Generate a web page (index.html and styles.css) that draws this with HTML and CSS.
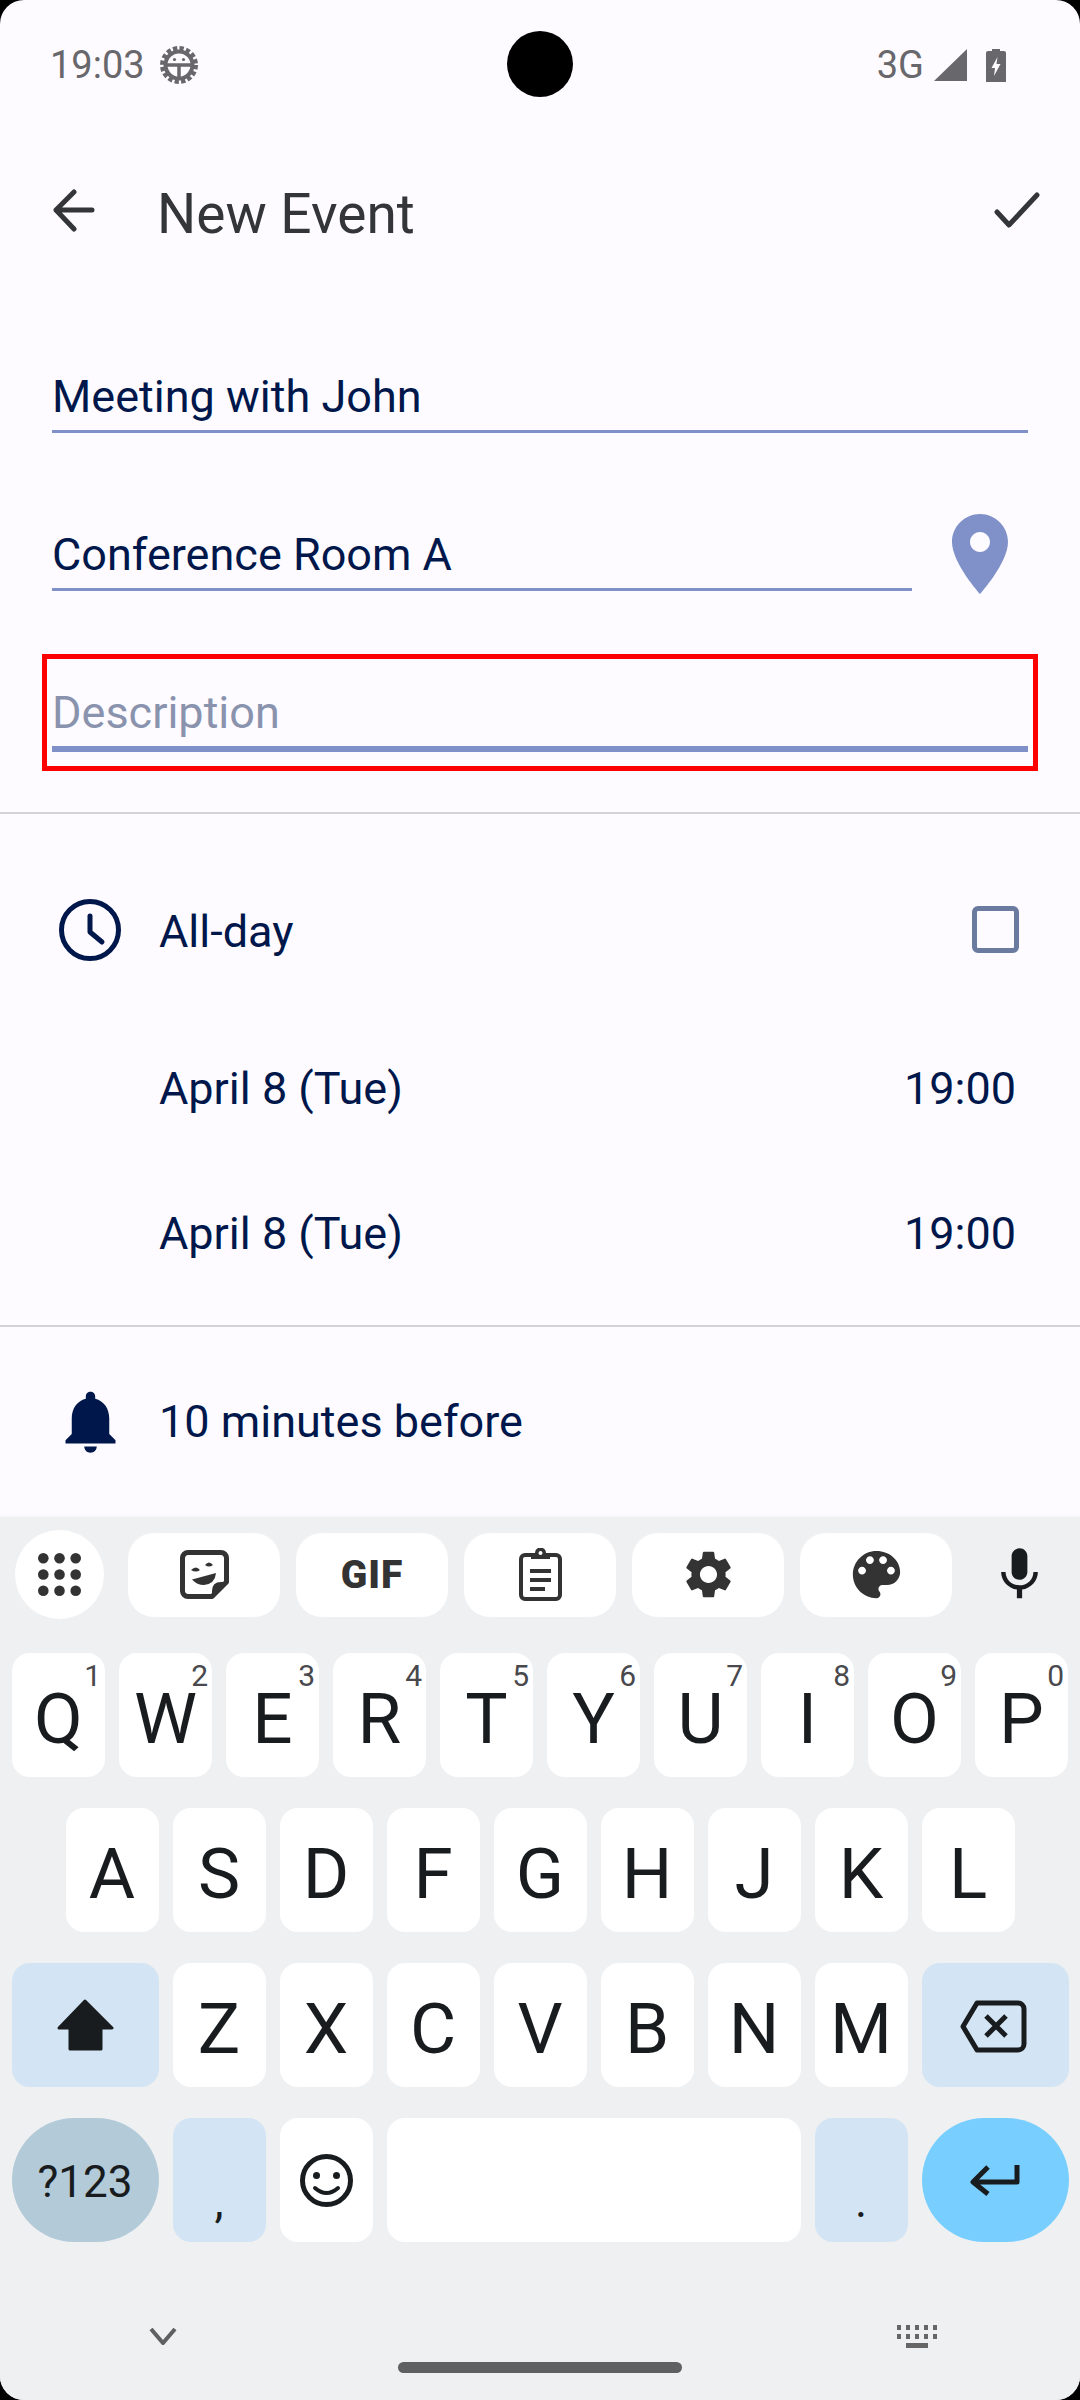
FILE: index.html
```html
<!DOCTYPE html>
<html lang="en">
<head>
    <meta charset="UTF-8">
    <meta name="viewport" content="width=device-width, initial-scale=1.0">
    <title>New Event</title>
    <link rel="stylesheet" href="styles.css">
</head>
<body>
    <div class="screen">
        <div class="camera"></div>
        <div class="content">
            <div class="status-bar">
                <span class="status-time">19:03</span>
                <svg class="status-debug" width="38" height="38" viewBox="0 0 38 38">
                    <circle cx="19" cy="19" r="16.5" fill="none" stroke="#68676b" stroke-width="5" stroke-dasharray="4.2 2.28"/>
                    <circle cx="19" cy="19" r="13.5" fill="none" stroke="#68676b" stroke-width="4"/>
                    <path d="M6 19H32M19 19V33" stroke="#68676b" stroke-width="3.5"/>
                    <circle cx="14.5" cy="13.5" r="1.6" fill="#68676b"/>
                    <circle cx="23.5" cy="13.5" r="1.6" fill="#68676b"/>
                </svg>
                <span class="status-net">3G</span>
                <svg class="status-signal" width="33" height="32" viewBox="0 0 33 32"><path d="M33 0V32H0Z" fill="#68676b"/></svg>
                <svg class="status-battery" width="20" height="33" viewBox="0 0 20 33">
                    <path d="M6 0H14V2H18Q20 2 20 4V33H0V4Q0 2 2 2H6Z" fill="#68676b"/>
                    <path d="M11.5 8L5.5 19H9L8 27L14.5 15H10.5Z" fill="#fdfbff"/>
                </svg>
            </div>

            <div class="app-bar">
                <svg width="44" height="44" viewBox="0 0 44 44"><path d="M4 21H40M22 3L4 21L22 40" fill="none" stroke="#333538" stroke-width="5" stroke-linecap="round" stroke-linejoin="round"/></svg>
                <h1 class="app-title">New Event</h1>
                <svg width="48" height="38" viewBox="0 0 48 38"><path d="M4 20L16 33L44 3" fill="none" stroke="#333538" stroke-width="5" stroke-linecap="round" stroke-linejoin="round"/></svg>
            </div>

            <div class="form">
                <div class="field">Meeting with John</div>
                <div class="field-row">
                    <div class="field">Conference Room A</div>
                    <svg class="pin" width="96" height="96" viewBox="0 0 24 24"><path d="M12 2C8.13 2 5 5.13 5 9c0 5.25 7 13 7 13s7-7.75 7-13c0-3.87-3.13-7-7-7zm0 9.5c-1.38 0-2.5-1.12-2.5-2.5s1.12-2.5 2.5-2.5 2.5 1.12 2.5 2.5-1.12 2.5-2.5 2.5z" fill="#7f91c8"/></svg>
                </div>
                <div class="field field-focus">Description</div>
            </div>

            <div class="times">
                <div class="row row-allday">
                    <svg class="row-clock" width="62" height="62" viewBox="0 0 62 62">
                        <circle cx="31" cy="31" r="28.5" fill="none" stroke="#00174b" stroke-width="5"/>
                        <path d="M31 17V33L43 43" fill="none" stroke="#00174b" stroke-width="5" stroke-linecap="round" stroke-linejoin="round"/>
                    </svg>
                    <span>All-day</span>
                    <span class="checkbox"></span>
                </div>
                <div class="row row-date row-date-first"><span>April 8 (Tue)</span><span>19:00</span></div>
                <div class="row row-date"><span>April 8 (Tue)</span><span>19:00</span></div>
            </div>

            <div class="row row-reminder">
                <svg class="row-bell" width="75" height="75" viewBox="0 0 24 24"><path d="M12 22c1.1 0 2-.9 2-2h-4c0 1.1.89 2 2 2zm6-6v-5c0-3.07-1.64-5.64-4.5-6.32V4c0-.83-.67-1.5-1.5-1.5s-1.5.67-1.5 1.5v.68C7.63 5.36 6 7.92 6 11v5l-2 2v1h16v-1l-2-2z" fill="#00174b"/></svg>
                <span>10 minutes before</span>
            </div>
        </div>

        <div class="keyboard">
            <div class="kb-tools">
                <div class="tool-circle">
                    <svg width="43" height="43" viewBox="0 0 43 43" fill="#333">
                        <circle cx="5.3" cy="5.3" r="5.3"/><circle cx="21.5" cy="5.3" r="5.3"/><circle cx="37.7" cy="5.3" r="5.3"/>
                        <circle cx="5.3" cy="21.5" r="5.3"/><circle cx="21.5" cy="21.5" r="5.3"/><circle cx="37.7" cy="21.5" r="5.3"/>
                        <circle cx="5.3" cy="37.7" r="5.3"/><circle cx="21.5" cy="37.7" r="5.3"/><circle cx="37.7" cy="37.7" r="5.3"/>
                    </svg>
                </div>
                <div class="tool-key">
                    <svg width="49" height="49" viewBox="0 0 49 49">
                        <path d="M2.5 8A5.5 5.5 0 0 1 8 2.500H41A5.500 5.500 0 0 1 46.500 8V32L32 46.500H8A5.500 5.500 0 0 1 2.500 41Z" fill="none" stroke="#333" stroke-width="5" stroke-linejoin="round"/>
                        <path d="M32 47V41Q32 32 41 32H47Z" fill="#333"/>
                        <path d="M12 29.500L36 23Q35 34 24 35Q17 35 12 29.500Z" fill="#333"/>
                        <path d="M11 20Q16 15 20 20Q16 23 11 20ZM25 15Q29 10 33 15Q29 18 25 15Z" fill="#333"/>
                    </svg>
                </div>
                <div class="tool-key tool-gif">GIF</div>
                <div class="tool-key">
                    <svg width="43" height="53" viewBox="0 0 43 53">
                        <rect x="2" y="7" width="39" height="44" rx="4" fill="none" stroke="#333" stroke-width="4"/>
                        <path d="M12 5H16A5.500 5.500 0 0 1 27 5H31V11H12Z" fill="#333"/>
                        <circle cx="21.500" cy="5" r="2" fill="#fff"/>
                        <path d="M11 23H32M11 32H32M11 41H26" stroke="#333" stroke-width="4"/>
                    </svg>
                </div>
                <div class="tool-key">
                    <svg width="57" height="57" viewBox="0 0 24 24"><path d="M19.14 12.94c.04-.3.06-.61.06-.94 0-.32-.02-.64-.07-.94l2.03-1.58c.18-.14.23-.41.12-.61l-1.92-3.32c-.12-.22-.37-.29-.59-.22l-2.39.96c-.5-.38-1.03-.7-1.62-.94l-.36-2.54c-.04-.24-.24-.41-.48-.41h-3.84c-.24 0-.43.17-.47.41l-.36 2.54c-.59.24-1.13.57-1.62.94l-2.39-.96c-.22-.08-.47 0-.59.22L2.74 8.87c-.12.21-.08.47.12.61l2.03 1.58c-.05.3-.09.63-.09.94s.02.64.07.94l-2.03 1.58c-.18.14-.23.41-.12.61l1.92 3.32c.12.22.37.29.59.22l2.39-.96c.5.38 1.03.7 1.62.94l.36 2.54c.05.24.24.41.48.41h3.84c.24 0 .44-.17.47-.41l.36-2.54c.59-.24 1.13-.56 1.62-.94l2.39.96c.22.08.47 0 .59-.22l1.92-3.32c.12-.22.07-.47-.12-.61l-2.01-1.58zM12 15.6c-1.98 0-3.6-1.62-3.6-3.6s1.62-3.6 3.6-3.6 3.6 1.62 3.6 3.6-1.62 3.6-3.6 3.6z" fill="#333"/></svg>
                </div>
                <div class="tool-key">
                    <svg width="63" height="63" viewBox="0 0 24 24"><path d="M12 3c-4.97 0-9 4.03-9 9s4.03 9 9 9c.83 0 1.5-.67 1.5-1.5 0-.39-.15-.74-.39-1.01-.23-.26-.38-.61-.38-.99 0-.83.67-1.5 1.500-1.500H16c2.760 0 5-2.240 5-5 0-4.420-4.030-8-9-8zm-5.500 9c-.83 0-1.500-.67-1.500-1.500S5.670 9 6.500 9 8 9.670 8 10.500 7.330 12 6.500 12zm3-4C8.670 8 8 7.330 8 6.500S8.670 5 9.500 5s1.500.67 1.500 1.500S10.330 8 9.500 8zm5 0c-.83 0-1.500-.67-1.500-1.500S13.670 5 14.500 5s1.500.67 1.500 1.500S15.330 8 14.500 8zm3 4c-.83 0-1.500-.67-1.500-1.500S16.670 9 17.500 9s1.500.67 1.500 1.500-.67 1.500-1.500 1.500z" fill="#333"/></svg>
                </div>
                <svg class="tool-mic" width="63" height="63" viewBox="0 0 24 24"><path d="M12 14c1.660 0 3-1.340 3-3V5c0-1.660-1.340-3-3-3S9 3.340 9 5v6c0 1.660 1.340 3 3 3zm5.300-3c0 3-2.540 5.100-5.300 5.100S6.700 14 6.700 11H5c0 3.410 2.720 6.230 6 6.720V21h2v-3.280c3.280-.48 6-3.300 6-6.720h-1.700z" fill="#191c1e"/></svg>
            </div>

            <div class="kb-row">
                <div class="key">Q<span class="hint">1</span></div>
                <div class="key">W<span class="hint">2</span></div>
                <div class="key">E<span class="hint">3</span></div>
                <div class="key">R<span class="hint">4</span></div>
                <div class="key">T<span class="hint">5</span></div>
                <div class="key">Y<span class="hint">6</span></div>
                <div class="key">U<span class="hint">7</span></div>
                <div class="key">I<span class="hint">8</span></div>
                <div class="key">O<span class="hint">9</span></div>
                <div class="key">P<span class="hint">0</span></div>
            </div>
            <div class="kb-row">
                <div class="key">A</div>
                <div class="key">S</div>
                <div class="key">D</div>
                <div class="key">F</div>
                <div class="key">G</div>
                <div class="key">H</div>
                <div class="key">J</div>
                <div class="key">K</div>
                <div class="key">L</div>
            </div>
            <div class="kb-row">
                <div class="key key-wide key-mod">
                    <svg width="57" height="52" viewBox="0 0 57 52"><path d="M28 2L55 29H44V50H13V29H2Z" fill="#191c1e" stroke="#191c1e" stroke-width="3" stroke-linejoin="round"/></svg>
                </div>
                <div class="key">Z</div>
                <div class="key">X</div>
                <div class="key">C</div>
                <div class="key">V</div>
                <div class="key">B</div>
                <div class="key">N</div>
                <div class="key">M</div>
                <div class="key key-wide key-mod">
                    <svg class="icon-backspace" width="67" height="53" viewBox="0 0 67 53">
                        <path d="M17 3H58A6 6 0 0 1 64 9V44A6 6 0 0 1 58 50H17L3 26.500Z" fill="none" stroke="#191c1e" stroke-width="5" stroke-linejoin="round"/>
                        <path d="M26 16L46 36M46 16L26 36" stroke="#191c1e" stroke-width="5"/>
                    </svg>
                </div>
            </div>
            <div class="kb-row">
                <div class="key key-wide key-symbols">?123</div>
                <div class="key key-mod key-punct">,</div>
                <div class="key">
                    <svg width="53" height="53" viewBox="0 0 53 53">
                        <circle cx="26.500" cy="26.500" r="24" fill="none" stroke="#191c1e" stroke-width="5"/>
                        <circle cx="16.500" cy="21.500" r="3.500" fill="#191c1e"/>
                        <circle cx="36.500" cy="21.500" r="3.500" fill="#191c1e"/>
                        <path d="M15 34Q26.500 44 38 34" fill="none" stroke="#191c1e" stroke-width="4" stroke-linecap="round"/>
                    </svg>
                </div>
                <div class="key key-space"></div>
                <div class="key key-mod key-punct">.</div>
                <div class="key key-wide key-enter">
                    <svg width="50" height="31" viewBox="0 0 50 31"><path d="M47 0V17H3M18 2L3 17L18 29" fill="none" stroke="#191c1e" stroke-width="5" stroke-linejoin="round"/></svg>
                </div>
            </div>

            <div class="kb-nav">
                <svg width="28" height="17" viewBox="0 0 28 17"><path d="M2 1L14 15L26 1" fill="none" stroke="#5f6062" stroke-width="4"/></svg>
                <svg width="41" height="23" viewBox="0 0 41 23" fill="#666">
                    <path d="M0 0h4v5H0zM9 0h4v5H9zM18 0h4v5h-4zM27 0h4v5h-4zM36 0h4v5h-4zM0 9h4v5H0zM9 9h4v5H9zM18 9h4v5h-4zM27 9h4v5h-4zM36 9h4v5h-4zM9 18h22v5H9z"/>
                </svg>
            </div>
            <div class="home-bar"></div>
        </div>
    </div>
</body>
</html>
```

FILE: styles.css
```css
* {
    box-sizing: border-box;
}
body {
    margin: 0;
    background: #000;
    font-family: Roboto, "Noto Sans", sans-serif;
}
.screen {
    position: relative;
    width: 1080px;
    height: 2400px;
    display: flex;
    flex-direction: column;
    border-radius: 24px;
    overflow: hidden;
    background: #fdfbff;
}
.camera {
    position: absolute;
    left: 507px;
    top: 31px;
    width: 66px;
    height: 66px;
    border-radius: 50%;
    background: #000;
}
.content {
    height: 1517px;
    overflow: hidden;
}

/* status bar */
.status-bar {
    height: 130px;
    padding: 0 74px 0 50px;
    display: flex;
    align-items: center;
    color: #68676b;
    font-size: 38px;
}
.status-debug {
    margin-left: 15px;
}
.status-net {
    margin-left: auto;
}
.status-signal {
    margin-left: 10px;
}
.status-battery {
    margin-left: 19px;
}

/* app bar */
.app-bar {
    height: 162px;
    padding: 0 39px 0 52px;
    display: flex;
    align-items: center;
}
.app-title {
    flex: 1;
    margin: 0;
    padding: 6px 0 0 61px;
    color: #333538;
    font-size: 55px;
    font-weight: 400;
    line-height: 60px;
}

/* text fields */
.form {
    padding: 75px 52px 0;
    display: flex;
    flex-direction: column;
    gap: 92px;
    height: 522px;
    border-bottom: 2px solid #d3d2d6;
}
.field {
    flex: 1;
    padding-bottom: 3px;
    border-bottom: 3px solid #7f91c8;
    color: #00174b;
    font-size: 45px;
    line-height: 60px;
}
.form > .field {
    flex: none;
}
.field-row {
    display: flex;
    align-items: flex-start;
    gap: 20px;
}
.pin {
    flex: none;
    margin: -19px 0 -11px;
}
.field-focus {
    position: relative;
    border-bottom-width: 6px;
    color: #8a93ad;
}
.field-focus::after {
    content: "";
    position: absolute;
    left: -10px;
    right: -10px;
    top: -29px;
    bottom: -25px;
    border: 5px solid #f00;
}

/* date and reminder rows */
.times {
    padding: 88px 0 61px;
    border-bottom: 2px solid #d3d2d6;
}
.row {
    display: flex;
    align-items: center;
    height: 60px;
    color: #00174b;
    font-size: 45px;
    line-height: 60px;
}
.row-allday {
    padding: 0 61px 0 59px;
    gap: 38px;
    margin-bottom: 97px;
}
.row-clock {
    margin-bottom: 4px;
}
.checkbox {
    width: 47px;
    height: 47px;
    margin: 0 0 5px auto;
    border: 5px solid #6b7a9f;
    border-radius: 6px;
}
.row-date {
    padding: 0 64px 0 159px;
    justify-content: space-between;
}
.row-date-first {
    margin-bottom: 85px;
}
.row-reminder {
    margin-top: 65px;
    padding-left: 53px;
    gap: 31px;
}
.row-bell {
    margin-bottom: 2px;
}

/* keyboard */
.keyboard {
    flex: 1;
    padding-top: 13px;
    background: #eff0f2;
    box-shadow: 0 -1px 2px #f3f2f5;
    color: #191c1e;
}
.kb-tools {
    height: 89px;
    padding-left: 15px;
    margin-bottom: 34px;
    display: flex;
    align-items: center;
    gap: 16px;
}
.tool-circle {
    width: 89px;
    height: 89px;
    margin-right: 8px;
    display: flex;
    align-items: center;
    justify-content: center;
    border-radius: 50%;
    background: #fff;
}
.tool-key {
    width: 152px;
    height: 84px;
    display: flex;
    align-items: center;
    justify-content: center;
    border-radius: 26px;
    background: #fff;
}
.tool-gif {
    color: #333;
    font-size: 39px;
    font-weight: 900;
    letter-spacing: 1px;
}
.tool-mic {
    margin-left: 20px;
}
.kb-row {
    height: 124px;
    margin-bottom: 31px;
    display: flex;
    justify-content: center;
    gap: 14px;
}
.key {
    position: relative;
    width: 93px;
    display: flex;
    align-items: center;
    justify-content: center;
    padding-top: 7px;
    border-radius: 18px;
    background: #fff;
    font-size: 71px;
    line-height: 1;
}
.key svg {
    margin-top: -7px;
}
.key svg.icon-backspace {
    margin: -5px 3px 0 0;
}
.hint {
    position: absolute;
    top: 8px;
    right: 4px;
    color: #49494d;
    font-size: 30px;
}
.key-wide {
    width: 147px;
}
.key-mod {
    background: #d3e4f4;
}
.key-symbols {
    padding-top: 4px;
    border-radius: 62px;
    background: #b3cad8;
    font-size: 44px;
}
.key-enter {
    border-radius: 62px;
    background: #78cfff;
}
.key-space {
    width: 414px;
}
.key-punct {
    font-size: 46px;
    padding-top: 42px;
}
.kb-nav {
    height: 54px;
    margin-top: 67px;
    padding: 0 142px 0 149px;
    display: flex;
    align-items: center;
    justify-content: space-between;
}
.home-bar {
    width: 284px;
    height: 11px;
    margin: -1px auto 0;
    border-radius: 6px;
    background: #5f6062;
}
```
